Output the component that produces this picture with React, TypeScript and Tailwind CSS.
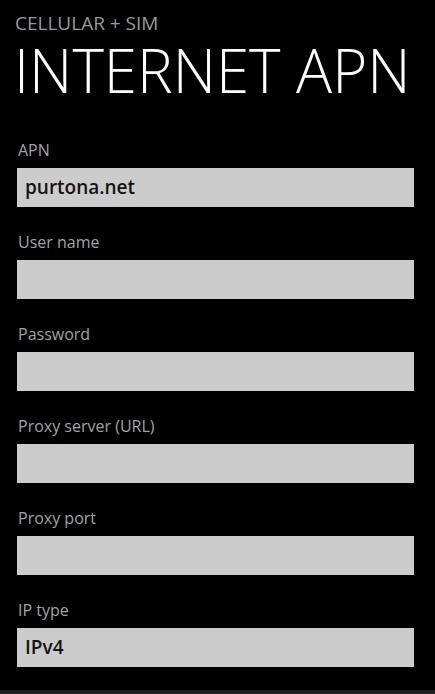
import React from 'react';

const fields = [
  { label: 'APN', value: 'purtona.net' },
  { label: 'User name', value: '' },
  { label: 'Password', value: '' },
  { label: 'Proxy server (URL)', value: '' },
  { label: 'Proxy port', value: '' },
  { label: 'IP type', value: 'IPv4' },
];

export default function App() {
  return (
    <div
      className="w-[435px] h-[694px] bg-black overflow-hidden flex flex-col"
      style={{ fontFamily: '"Open Sans", "Noto Sans", sans-serif' }}
    >
      <div className="flex-1">
        {/* Header */}
        <div className="pl-[15px] pt-[10px] text-[19px] leading-[26px] text-[#9a9a9a]">
          CELLULAR + SIM
        </div>
        <h1 className="pl-[14px] mt-[4px] text-[60px] leading-[60px] font-light text-white">
          INTERNET APN
        </h1>

        {/* Fields */}
        <div className="pt-[38px] px-[17px] flex flex-col">
          {fields.map((f) => (
            <div key={f.label} className="flex flex-col h-[92px]">
              <div className="text-[16px] leading-[24px] text-[#a3a3a3] pl-[1px]">{f.label}</div>
              <div className="mt-[6px] h-[39px] w-[397px] bg-[#cccccc] flex items-center pl-[8px] text-[19px] font-semibold text-[#141414]">
                {f.value}
              </div>
            </div>
          ))}
        </div>
      </div>
      <div className="h-[4px] bg-[#1f1f1f]" />
    </div>
  );
}
